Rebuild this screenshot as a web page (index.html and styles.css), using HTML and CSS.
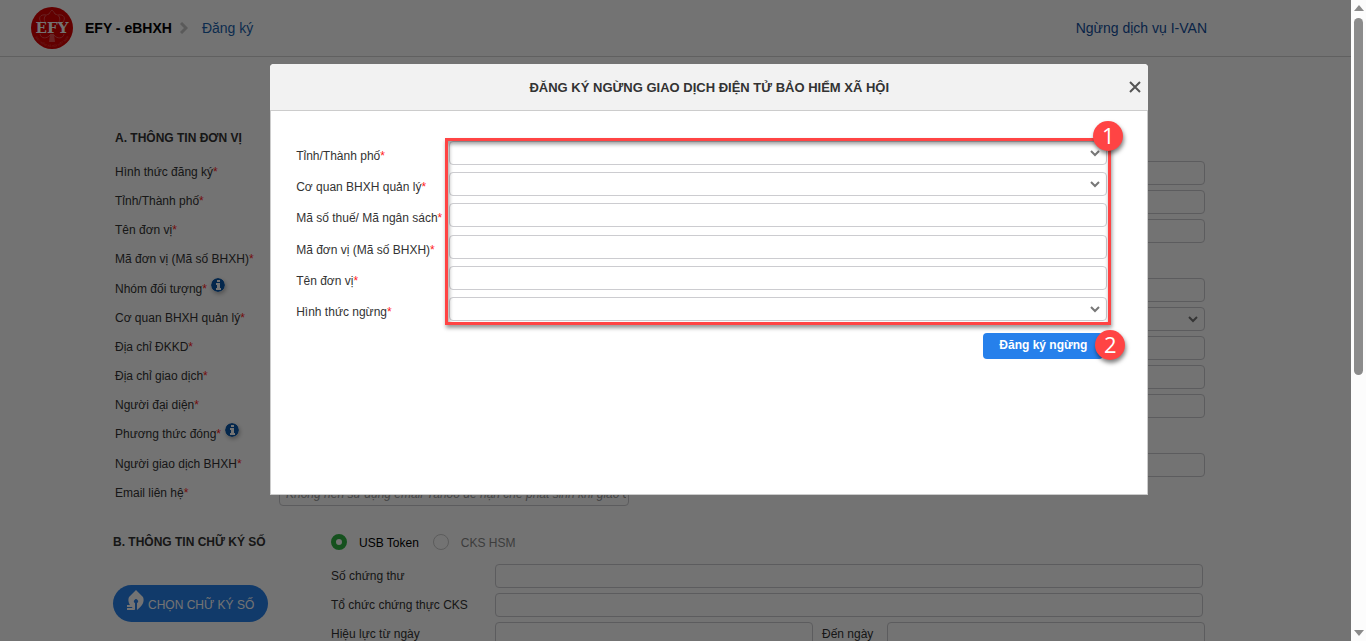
FILE: index.html
```html
<!DOCTYPE html>
<html lang="vi">
<head>
    <meta charset="utf-8">
    <meta name="viewport" content="width=device-width, initial-scale=1.0">
    <title>EFY - eBHXH</title>
    <link rel="stylesheet" href="styles.css">
</head>
<body>
    <div class="page">
        <header class="topbar">
            <svg class="logo" viewBox="0 0 42 42">
                <defs>
                    <path id="logo-arc" d="M2 21 A19 19 0 0 0 40 21"/>
                </defs>
                <circle cx="21" cy="21" r="21" fill="#d90000"/>
                <g fill="none" stroke="#e85050" stroke-width="1">
                    <path d="M14 15 C12 11 14 8 18 7 C19 5 20 4 21 3 C22 4 23 5 24 7 C28 8 30 11 28 15"/>
                    <path d="M15 8 C9 7 7 11 10 15 M27 8 C33 7 35 11 32 15"/>
                    <path d="M9 27 C10 32 16 32 19 28 M33 27 C32 32 26 32 23 28"/>
                </g>
                <path d="M19 27 h4 l1 8 h-6z" fill="#e85050"/>
                <text class="logo-ring"><textPath href="#logo-arc" startOffset="50%" text-anchor="middle">BẢO HIỂM XÃ HỘI VIỆT NAM</textPath></text>
                <text class="logo-name" x="21" y="26" text-anchor="middle">EFY</text>
            </svg>
            <strong class="brand">EFY - eBHXH</strong>
            <svg class="crumb-arrow" viewBox="0 0 8 12"><path d="M1 1 L6 6 L1 11" fill="none" stroke="#c8c8c8" stroke-width="3"/></svg>
            <a class="crumb" href="#">Đăng ký</a>
            <a class="stop-link" href="#">Ngừng dịch vụ I-VAN</a>
        </header>

        <main class="content">
            <!-- Section A: unit information -->
            <h2 class="section-title">A. THÔNG TIN ĐƠN VỊ</h2>
            <div class="form-row">
                <label for="reg-type">Hình thức đăng ký<em>*</em></label>
                <input class="field" id="reg-type" type="text">
            </div>
            <div class="form-row">
                <label for="province">Tỉnh/Thành phố<em>*</em></label>
                <input class="field" id="province" type="text">
            </div>
            <div class="form-row">
                <label for="unit-name">Tên đơn vị<em>*</em></label>
                <input class="field" id="unit-name" type="text">
            </div>
            <div class="form-row tall">
                <label for="unit-code">Mã đơn vị (Mã số BHXH)<em>*</em></label>
                <input class="field short" id="unit-code" type="text">
            </div>
            <div class="form-row">
                <label for="group">Nhóm đối tượng<em>*</em>
                    <svg class="info" viewBox="0 0 14 14"><circle cx="7" cy="7" r="7" fill="#0b57a8"/><path d="M6 2h3v2H6z M5 5h4v5h1v2H5v-2h1V7H5z" fill="#fff"/></svg>
                </label>
                <input class="field" id="group" type="text">
            </div>
            <div class="form-row">
                <label for="agency">Cơ quan BHXH quản lý<em>*</em></label>
                <select class="field" id="agency"><option></option></select>
            </div>
            <div class="form-row">
                <label for="reg-address">Địa chỉ ĐKKD<em>*</em></label>
                <input class="field" id="reg-address" type="text">
            </div>
            <div class="form-row">
                <label for="address">Địa chỉ giao dịch<em>*</em></label>
                <input class="field" id="address" type="text">
            </div>
            <div class="form-row">
                <label for="person">Người đại diện<em>*</em></label>
                <input class="field" id="person" type="text">
            </div>
            <div class="form-row tall">
                <label for="method">Phương thức đóng<em>*</em>
                    <svg class="info" viewBox="0 0 14 14"><circle cx="7" cy="7" r="7" fill="#0b57a8"/><path d="M6 2h3v2H6z M5 5h4v5h1v2H5v-2h1V7H5z" fill="#fff"/></svg>
                </label>
                <input class="field short" id="method" type="text">
            </div>
            <div class="form-row">
                <label for="contact">Người giao dịch BHXH<em>*</em></label>
                <input class="field" id="contact" type="text">
            </div>
            <div class="form-row">
                <label for="email">Email liên hệ<em>*</em></label>
                <input class="field short" id="email" type="text" placeholder="Không nên sử dụng email Yahoo để hạn chế phát sinh khi giao dịch">
            </div>

            <!-- Section B: digital signature -->
            <section class="signature">
                <div class="signature-side">
                    <h2 class="section-title">B. THÔNG TIN CHỮ KÝ SỐ</h2>
                    <button class="sign-button" type="button">
                        <svg class="pen" viewBox="0 0 18 22"><path d="M9 0 L16 7 C18 12 15 16 10 20 V13 A2 2 0 1 0 8 13 V20 C3 16 0 12 2 7z" fill="#fff"/><path d="M0 15 H4 L5 17 H0z M0 18 H6 L8 20 H0z" fill="#fff"/></svg>
                        <span>CHỌN CHỮ KÝ SỐ</span>
                    </button>
                </div>
                <div class="signature-main">
                    <div class="radios">
                        <label class="radio"><input type="radio" name="token" checked><span>USB Token</span></label>
                        <label class="radio"><input type="radio" name="token"><span>CKS HSM</span></label>
                    </div>
                    <div class="sign-row">
                        <label for="serial">Số chứng thư</label>
                        <input class="field" id="serial" type="text">
                    </div>
                    <div class="sign-row">
                        <label for="issuer">Tổ chức chứng thực CKS</label>
                        <input class="field" id="issuer" type="text">
                    </div>
                    <div class="sign-row dates">
                        <label for="from">Hiệu lực từ ngày</label>
                        <input class="field" id="from" type="text">
                        <label for="to">Đến ngày</label>
                        <input class="field" id="to" type="text">
                    </div>
                </div>
            </section>
        </main>

        <div class="backdrop">
            <div class="modal" role="dialog" aria-labelledby="modal-title">
                <div class="modal-header">
                    <h1 class="modal-title" id="modal-title">ĐĂNG KÝ NGỪNG GIAO DỊCH ĐIỆN TỬ BẢO HIỂM XÃ HỘI</h1>
                    <button class="close" type="button" aria-label="Đóng">
                        <svg viewBox="0 0 12 12"><path d="M1 1 L11 11 M11 1 L1 11" stroke="#555" stroke-width="2"/></svg>
                    </button>
                </div>
                <form class="modal-body">
                    <div class="modal-fields">
                        <label for="m-province">Tỉnh/Thành phố<em>*</em></label>
                        <select class="field" id="m-province"><option></option></select>
                        <label for="m-agency">Cơ quan BHXH quản lý<em>*</em></label>
                        <select class="field" id="m-agency"><option></option></select>
                        <label for="m-tax">Mã số thuế/ Mã ngân sách<em>*</em></label>
                        <input class="field" id="m-tax" type="text">
                        <label for="m-code">Mã đơn vị (Mã số BHXH)<em>*</em></label>
                        <input class="field" id="m-code" type="text">
                        <label for="m-name">Tên đơn vị<em>*</em></label>
                        <input class="field" id="m-name" type="text">
                        <label for="m-type">Hình thức ngừng<em>*</em></label>
                        <select class="field" id="m-type"><option></option></select>
                        <div class="marker"><span class="badge">1</span></div>
                    </div>
                    <div class="modal-actions">
                        <button class="submit" type="button">Đăng ký ngừng</button>
                        <span class="badge">2</span>
                    </div>
                </form>
            </div>
        </div>
    </div>

    <div class="scrollbar">
        <svg class="scroll-arrow" viewBox="0 0 10 6"><path d="M5 0 L10 6 H0z" fill="#8b8b8b"/></svg>
        <div class="scroll-track"><div class="scroll-thumb"></div></div>
        <svg class="scroll-arrow" viewBox="0 0 10 6"><path d="M0 0 H10 L5 6z" fill="#8b8b8b"/></svg>
    </div>
</body>
</html>
```

FILE: styles.css
```css
* {
    margin: 0;
    padding: 0;
    box-sizing: border-box;
}

body {
    display: flex;
    height: 100vh;
    overflow: hidden;
    background: #fff;
    color: #333;
    font-family: "Liberation Sans", Arial, sans-serif;
    font-size: 12px;
    line-height: 16px;
}

em {
    color: #f22;
    font-style: normal;
}

a {
    text-decoration: none;
}

.page {
    position: relative;
    flex: 1;
    min-width: 0;
    overflow: hidden;
}

/* top bar */

.topbar {
    display: flex;
    align-items: center;
    height: 57px;
    padding: 0 144px 0 31px;
    border-bottom: 1px solid #d5d5d5;
    font-size: 14px;
}

.logo {
    width: 42px;
    height: 42px;
    margin-right: 12px;
}

.logo-name {
    font: bold 15px "DejaVu Serif", serif;
    fill: #fff;
}

.logo-ring {
    font-size: 3px;
    fill: #e85050;
}

.brand {
    color: #000;
}

.crumb-arrow {
    width: 8px;
    height: 12px;
    margin: 0 14px 0 8px;
}

.crumb {
    color: #1a62ae;
}

.stop-link {
    margin-left: auto;
    color: #13509e;
}

/* registration form */

.content {
    padding: 73px 146px 0 115px;
}

.section-title {
    font-size: 12px;
    line-height: 16px;
}

.content > .section-title {
    margin-bottom: 15px;
}

.form-row {
    display: flex;
    height: 29px;
}

.form-row.tall {
    height: 30px;
}

.form-row > label {
    display: flex;
    flex: 0 0 164px;
    padding-top: 3px;
}

.field {
    display: block;
    width: 100%;
    min-width: 0;
    height: 24px;
    padding: 0 2px 0 6px;
    border: 1px solid #ccccd0;
    border-radius: 4px;
    background-color: #fff;
    font-family: inherit;
    font-size: 12px;
}

.field.short {
    width: 350px;
}

.field::placeholder {
    color: #999;
    font-style: italic;
}

select.field {
    appearance: none;
    background-image: url("data:image/svg+xml,%3Csvg xmlns='http://www.w3.org/2000/svg' viewBox='0 0 10 7'%3E%3Cpath d='M1 1l4 4 4-4' fill='none' stroke='%23777' stroke-width='2'/%3E%3C/svg%3E");
    background-position: right 6px center;
    background-repeat: no-repeat;
    background-size: 10px 7px;
}

.info {
    width: 14px;
    height: 14px;
    margin: -3px 0 0 4px;
    border-radius: 50%;
    box-shadow: 1px 2px 4px rgba(0, 0, 0, 0.3);
}

/* digital signature */

.signature {
    display: flex;
    margin: 22px 0 0 -2px;
}

.signature-side {
    flex: 0 0 218px;
    padding-top: 1px;
}

.sign-button {
    display: flex;
    align-items: center;
    width: 155px;
    height: 37px;
    margin-top: 35px;
    padding-left: 14px;
    border: 0;
    border-radius: 19px;
    background: #2680eb;
    color: #fff;
    font-family: inherit;
    font-size: 12px;
    gap: 3px;
}

.sign-button span {
    padding-top: 2px;
}

.pen {
    width: 18px;
    height: 22px;
    margin-bottom: 6px;
}

.signature-main {
    flex: 1;
}

.radios {
    display: flex;
    gap: 14px;
    height: 31px;
}

.radio {
    display: flex;
    gap: 12px;
    height: 18px;
    align-items: center;
    color: #888;
}

.radio span {
    padding-top: 1px;
}

.radio input {
    appearance: none;
    width: 16px;
    height: 16px;
    border: 1px solid #ccc;
    border-radius: 50%;
}

.radio input:checked {
    border: 5px solid #2fb344;
}

.radio input:checked + span {
    color: #000;
}

.sign-row {
    display: flex;
    height: 29px;
    padding-right: 2px;
}

.sign-row.dates {
    padding-right: 0;
}

.sign-row label {
    flex: 0 0 164px;
    padding-top: 4px;
}

.sign-row .field + label {
    flex-basis: 74px;
    padding-left: 9px;
}

/* modal */

.backdrop {
    position: absolute;
    inset: 0;
    padding-top: 64px;
    background: rgba(0, 0, 0, 0.55);
}

.modal {
    width: 65%;
    margin-left: 20%;
    border-radius: 4px 4px 0 0;
    background: #fff;
}

.modal-header {
    display: flex;
    align-items: center;
    height: 47px;
    padding: 0 7px 0 19px;
    border-bottom: 1px solid #ccc;
    border-radius: 4px 4px 0 0;
    background: #f2f2f2;
}

.modal-title {
    flex: 1;
    padding-top: 2px;
    font-size: 13px;
    text-align: center;
}

.close {
    width: 12px;
    height: 14px;
    border: 0;
    background: none;
}

.close svg {
    display: block;
    width: 12px;
    height: 12px;
}

.modal-body {
    min-height: 384px;
    padding: 30px 40px 0 25px;
    border: 1px solid #ccc;
    border-top: 0;
}

.modal-fields {
    position: relative;
    display: grid;
    grid-template-columns: 153px 1fr;
    grid-template-rows: 24px 24px 25px 24px 24px 24px;
    row-gap: 7px;
}

.modal-fields label {
    height: 24px;
    padding-top: 7px;
    white-space: nowrap;
}

.marker {
    position: absolute;
    top: -3px;
    right: -4px;
    bottom: -4px;
    left: 149px;
    border: 3px solid #ff4444;
    box-shadow: 1px 3px 4px rgba(0, 0, 0, 0.4), inset 1px 3px 4px rgba(0, 0, 0, 0.4);
    pointer-events: none;
}

.badge {
    position: absolute;
    top: -20px;
    right: -15px;
    width: 30px;
    height: 30px;
    border-radius: 50%;
    background: #ff4444;
    box-shadow: 1px 3px 4px rgba(0, 0, 0, 0.5);
    color: #fff;
    font-family: "Open Sans", sans-serif;
    font-size: 22px;
    line-height: 29px;
    text-align: center;
}

.modal-actions {
    position: relative;
    display: flex;
    justify-content: flex-end;
    margin-top: 12px;
    padding-right: 4px;
}

.modal-actions .badge {
    top: -3px;
    right: -18px;
}

.submit {
    width: 120px;
    height: 26px;
    padding-bottom: 2px;
    border: 0;
    border-radius: 4px;
    background: #2680eb;
    color: #fff;
    font-family: inherit;
    font-size: 12px;
    font-weight: bold;
}

/* window scrollbar */

.scrollbar {
    display: flex;
    flex: 0 0 15px;
    flex-direction: column;
    align-items: center;
    padding: 5px 0;
    background: #fcfcfc;
}

.scroll-arrow {
    width: 10px;
    height: 6px;
}

.scroll-track {
    flex: 1;
    width: 9px;
    padding: 7px 0;
}

.scroll-thumb {
    height: 59%;
    border-radius: 5px;
    background: #8b8b8b;
}
```
